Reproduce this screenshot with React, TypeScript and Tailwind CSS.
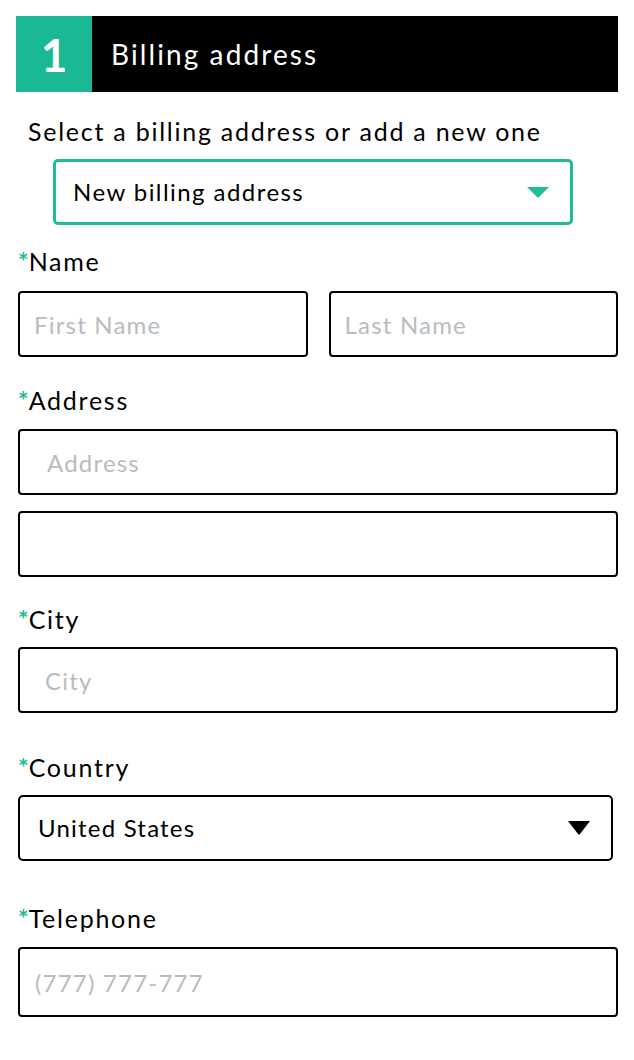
import React from "react";

const font = { fontFamily: "Lato, 'Noto Sans', sans-serif" };

function Label({ text, className }: { text: string; className: string }) {
  return (
    <div className={`text-[25px] leading-[32px] tracking-[0.07em] text-black ${className}`}>
      <span className="text-[#1cb994] font-bold tracking-normal">*</span>
      {text}
    </div>
  );
}

function Field({ placeholder, className, pad = "pl-[14px]" }: { placeholder?: string; className: string; pad?: string }) {
  return (
    <input
      placeholder={placeholder}
      className={`block w-full border-2 border-black rounded-[4px] text-[24px] tracking-[0.05em] text-black placeholder:text-[#b9bcbf] outline-none ${pad} ${className}`}
      style={font}
    />
  );
}

export default function App() {
  return (
    <div className="w-[634px] h-[1060px] bg-white px-[16px] pt-[16px]" style={font}>
      <div className="flex h-[76px] bg-black">
        <div className="w-[76px] bg-[#1ab895] flex items-center justify-center text-white text-[46px] font-bold">1</div>
        <div className="flex items-center pl-[19px] text-white text-[28px] tracking-[0.075em]">Billing address</div>
      </div>

      <div className="mt-[23px] pl-[12px] text-[25px] leading-[32px] tracking-[0.07em] text-black">
        Select a billing address or add a new one
      </div>

      <div className="mt-[12px] ml-[37px] w-[520px] h-[66px] border-[3px] border-[#1fbc9c] rounded-[5px] flex items-center justify-between pl-[17px] pr-[20px]">
        <span className="text-[24px] tracking-[0.06em] text-black">New billing address</span>
        <svg width="24" height="12" viewBox="0 0 24 12">
          <path d="M1 1 H23 L13 11 Q12 12 11 11 Z" fill="#1fbc9c" />
        </svg>
      </div>

      <div className="pl-[2px]">
        <Label text="Name" className="mt-[20px]" />
        <div className="mt-[14px] flex gap-[21px]">
          <Field placeholder="First Name" className="h-[66px]" />
          <Field placeholder="Last Name" className="h-[66px]" />
        </div>

        <Label text="Address" className="mt-[27px]" />
        <Field placeholder="Address" className="mt-[13px] h-[66px]" pad="pl-[27px]" />
        <Field className="mt-[16px] h-[66px]" />

        <Label text="City" className="mt-[26px]" />
        <Field placeholder="City" className="mt-[12px] h-[66px]" pad="pl-[25px]" />

        <Label text="Country" className="mt-[38px]" />
        <div className="mt-[12px] w-[595px] h-[66px] border-2 border-black rounded-[5px] flex items-center justify-between pl-[18px] pr-[20px]">
          <span className="text-[24px] tracking-[0.05em] text-black">United States</span>
          <svg width="24" height="16" viewBox="0 0 24 16">
            <path d="M1 1 H23 L13 14 Q12 15 11 14 Z" fill="#000" />
          </svg>
        </div>

        <Label text="Telephone" className="mt-[41px]" />
        <Field placeholder="(777) 777-777" className="mt-[13px] h-[70px]" pad="pl-[15px]" />
      </div>
    </div>
  );
}
